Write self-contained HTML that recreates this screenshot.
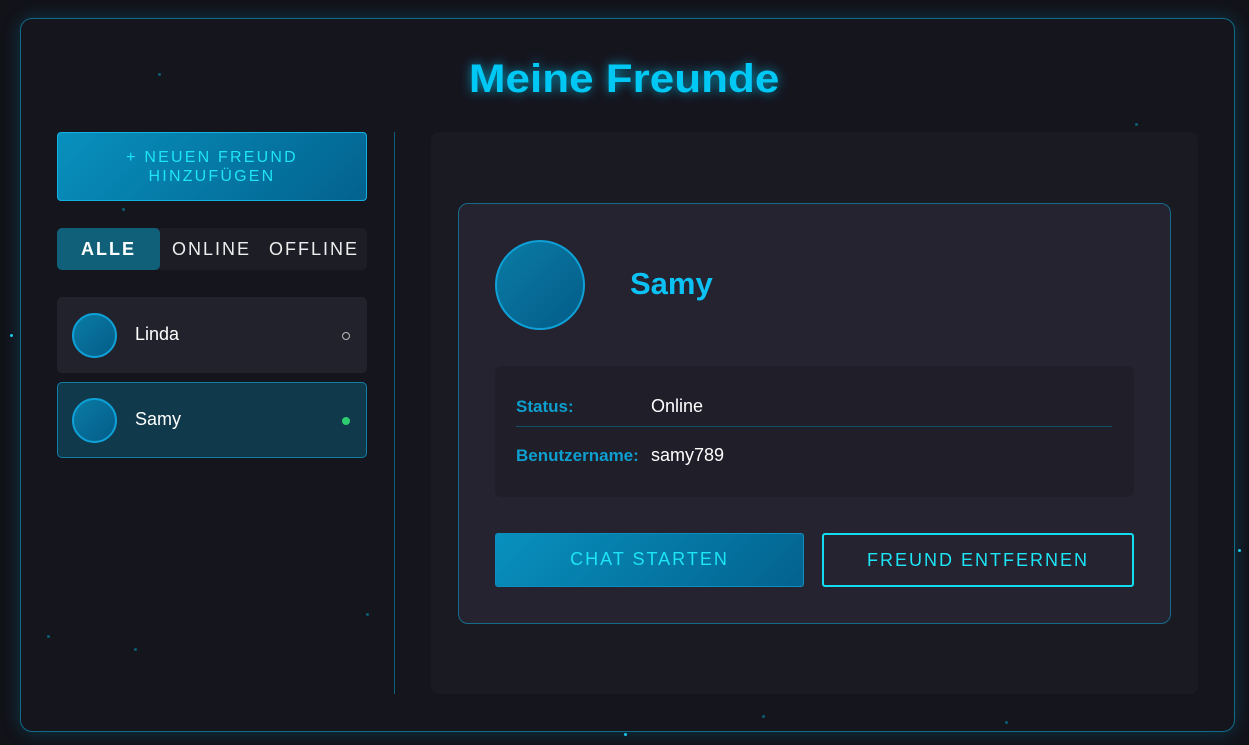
<!DOCTYPE html>
<html><head><meta charset="utf-8"><style>
*{box-sizing:border-box;margin:0;padding:0}
body{width:1249px;height:745px;background:#121219;font-family:"Liberation Sans",sans-serif;position:relative;overflow:hidden}
.frame{position:absolute;left:20px;top:18px;width:1215px;height:714px;border:1px solid #116a86;border-radius:12px;background:#15151e;box-shadow:0 0 18px rgba(0,170,220,.25)}
.title{position:absolute;left:0;width:1249px;top:57px;text-align:center;color:#00c8f5;font-size:40px;font-weight:bold;letter-spacing:0px;text-shadow:0 0 10px rgba(0,200,245,.7)}
.title span{display:inline-block;transform:scaleX(1.1)}
.addbtn{position:absolute;left:57px;top:132px;width:310px;height:69px;border:1px solid #14b0e0;border-radius:4px;background:linear-gradient(135deg,#0890bd,#03628f);color:#1ee4f5;font-size:16px;letter-spacing:2.2px;text-align:center;line-height:19px;padding-top:15px}
.tabs{position:absolute;left:57px;top:228px;width:310px;height:42px;background:#1d1d26;border-radius:5px}
.tab{position:absolute;top:0;height:42px;line-height:42px;color:#eee;font-size:18px;letter-spacing:2px}
.tab.a{left:0;width:103px;background:#10607a;border-radius:5px;text-align:center;font-weight:bold;color:#fff}
.item{position:absolute;left:57px;width:310px;height:76px;border-radius:5px;background:#22222c}
.item.sel{background:#10394b;border:1px solid #127fa5}
.av{position:absolute;border-radius:50%;border:2px solid #0ea0d6;background:linear-gradient(135deg,#0a7ba5,#035d88)}
.item .av{left:15px;top:16px;width:45px;height:45px}
.item.sel .av{left:14px;top:15px}
.item .nm{position:absolute;left:78px;top:27px;color:#fff;font-size:18px}
.item.sel .nm{left:77px;top:26px}
.dot{position:absolute;right:17px;top:35px;width:8px;height:8px;border-radius:50%}
.vline{position:absolute;left:394px;top:132px;width:1px;height:562px;background:#0e5f7c}
.panel{position:absolute;left:431px;top:132px;width:767px;height:562px;background:#1a1a23;border-radius:8px}
.card{position:absolute;left:458px;top:203px;width:713px;height:421px;background:#24232f;border:1px solid #166b8b;border-radius:10px}
.info{position:absolute;left:495px;top:366px;width:639px;height:131px;background:#1f1e29;border-radius:7px}
.lbl{position:absolute;color:#0d9fcf;font-weight:bold;font-size:17px}
.val{position:absolute;color:#fff;font-size:18px}
.btn{position:absolute;top:533px;height:54px;border-radius:3px;text-align:center;line-height:50px;color:#1ee4f5;font-size:18px;letter-spacing:2px}
.px{position:absolute;width:3px;height:3px;border-radius:50%;background:#0b5d72}
</style></head><body>
<div class="frame"></div>
<div class="px" style="left:10px;top:334px;background:#19c8e8"></div>
<div class="px" style="left:1238px;top:549px;background:#19c8e8"></div>
<div class="px" style="left:624px;top:733px;background:#19c8e8"></div>
<div class="px" style="left:158px;top:73px"></div>
<div class="px" style="left:122px;top:208px"></div>
<div class="px" style="left:47px;top:635px"></div>
<div class="px" style="left:134px;top:648px"></div>
<div class="px" style="left:366px;top:613px"></div>
<div class="px" style="left:1135px;top:123px"></div>
<div class="px" style="left:1005px;top:721px"></div>
<div class="px" style="left:762px;top:715px"></div>
<div class="title"><span>Meine Freunde</span></div>
<div class="addbtn">+ NEUEN FREUND<br>HINZUFÜGEN</div>
<div class="tabs"><div class="tab a">ALLE</div><div class="tab" style="left:115px">ONLINE</div><div class="tab" style="left:212px">OFFLINE</div></div>
<div class="item" style="top:297px"><div class="av"></div><div class="nm">Linda</div><div class="dot" style="border:1px solid #bbb;right:17px"></div></div>
<div class="item sel" style="top:382px"><div class="av"></div><div class="nm">Samy</div><div class="dot" style="background:#2ecc71;right:16px;top:34px"></div></div>
<div class="vline"></div>
<div class="panel"></div>
<div class="card"></div>
<div class="av" style="left:495px;top:240px;width:90px;height:90px"></div>
<div style="position:absolute;left:630px;top:266px;color:#0cc2f5;font-size:31px;font-weight:bold">Samy</div>
<div class="info"></div>
<div class="lbl" style="left:516px;top:397px">Status:</div>
<div class="val" style="left:651px;top:396px">Online</div>
<div style="position:absolute;left:516px;top:426px;width:596px;height:1px;background:#12506a"></div>
<div class="lbl" style="left:516px;top:446px">Benutzername:</div>
<div class="val" style="left:651px;top:445px">samy789</div>
<div class="btn" style="left:495px;width:309px;border:1px solid #0d8ec0;background:linear-gradient(135deg,#0890bd,#03628f)">CHAT STARTEN</div>
<div class="btn" style="left:822px;width:312px;border:2px solid #13dcf0">FREUND ENTFERNEN</div>
</body></html>
